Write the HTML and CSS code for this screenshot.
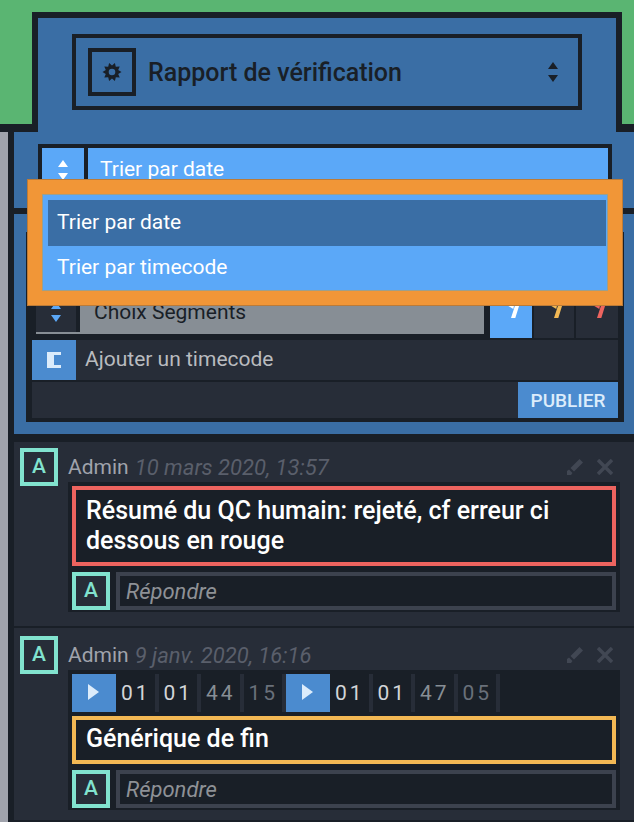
FILE: index.html
```
<!DOCTYPE html>
<html lang="fr">
<head>
  <meta charset="UTF-8">
  <meta name="viewport" content="width=device-width, initial-scale=1.0">
  <title>Rapport de vérification</title>
  <link rel="stylesheet" href="styles.css">
</head>
<body>
  <header class="header">
    <div class="tab">
      <button class="report" type="button">
        <span class="report-icon">
          <svg width="20" height="20" viewBox="0 0 20 20"><path fill="currentColor" fill-rule="evenodd" d="M19.500 10L16.200 12 17.700 15.600 13.800 15.300 12.900 19 10 16.500 7.100 19 6.200 15.300 2.300 15.600 3.800 12 .5 10 3.800 8 2.300 4.400 6.200 4.700 7.100 1 10 3.500 12.900 1 13.800 4.700 17.700 4.400 16.200 8zM10 6.700a3.300 3.300 0 1 0 0 6.600 3.300 3.300 0 0 0 0-6.600z"/></svg>
        </span>
        <span class="report-title">Rapport de vérification</span>
        <svg class="arrows" width="10" height="20" viewBox="0 0 10 20"><path fill="currentColor" d="M5 0l5 7H0zM5 20l5-7H0z"/></svg>
      </button>
    </div>
  </header>

  <main class="panel">
    <section class="sort">
      <button class="sort-select" type="button" aria-haspopup="listbox" aria-expanded="true">
        <span class="sort-icon"><svg class="arrows" width="10" height="20" viewBox="0 0 10 20"><path fill="currentColor" d="M5 0l5 7H0zM5 20l5-7H0z"/></svg></span>
        <span class="sort-label">Trier par date</span>
      </button>
      <div class="menu" role="listbox" aria-label="Tri">
        <button class="option selected" type="button" role="option" aria-selected="true">Trier par date</button>
        <button class="option" type="button" role="option" aria-selected="false">Trier par timecode</button>
      </div>
    </section>

    <section class="new-comment">
      <form class="form">
        <textarea class="message-input" aria-label="Commentaire"></textarea>
        <div class="form-row tools">
          <div class="segments">
            <span class="segments-icon"><svg class="arrows" width="10" height="20" viewBox="0 0 10 20"><path fill="currentColor" d="M5 0l5 7H0zM5 20l5-7H0z"/></svg></span>
            <select class="segments-select" aria-label="Segments">
              <option>Choix Segments</option>
            </select>
          </div>
          <div class="flags">
            <button class="flag white" type="button" aria-label="Information"><svg width="22" height="24" viewBox="0 0 22 24"><path fill="currentColor" d="M11 24h4.300L21.500 4h-4zM0 7l3-5h13l-2.700 13z"/></svg></button>
            <button class="flag yellow" type="button" aria-label="Attention"><svg width="22" height="24" viewBox="0 0 22 24"><path fill="currentColor" d="M11 24h4.300L21.500 4h-4zM0 7l3-5h13l-2.700 13z"/></svg></button>
            <button class="flag red" type="button" aria-label="Erreur"><svg width="22" height="24" viewBox="0 0 22 24"><path fill="currentColor" d="M11 24h4.300L21.500 4h-4zM0 7l3-5h13l-2.700 13z"/></svg></button>
          </div>
        </div>
        <button class="form-row add-timecode" type="button">
          <span class="timecode-icon"><svg width="14" height="16" viewBox="0 0 14 16"><path fill="currentColor" d="M0 0h14v3H7v10h7v3H0z"/></svg></span>
          <span class="add-label">Ajouter un timecode</span>
        </button>
        <div class="form-row actions">
          <button class="publish" type="submit">PUBLIER</button>
        </div>
      </form>
    </section>

    <section class="comments">
      <article class="comment">
        <span class="avatar">A</span>
        <div class="comment-main">
          <div class="comment-head">
            <span class="author">Admin</span>
            <time class="date" datetime="2020-03-10T13:57">10 mars 2020, 13:57</time>
            <button class="icon-button" type="button" aria-label="Modifier"><svg width="16" height="16" viewBox="0 0 16 16"><path fill="currentColor" d="M12.500 0L16 3.500 7 12.500 3.500 9zM2 10.500L5.500 14 4 16H0v-4z"/></svg></button>
            <button class="icon-button" type="button" aria-label="Supprimer"><svg width="16" height="16" viewBox="0 0 16 16"><path fill="none" stroke="currentColor" stroke-width="3.500" d="M1 1l14 14M15 1L1 15"/></svg></button>
          </div>
          <div class="thread">
            <p class="message error">Résumé du QC humain: rejeté, cf erreur ci dessous en rouge</p>
            <div class="reply">
              <span class="avatar">A</span>
              <input class="reply-input" type="text" placeholder="Répondre" aria-label="Répondre">
            </div>
          </div>
        </div>
      </article>

      <article class="comment">
        <span class="avatar">A</span>
        <div class="comment-main">
          <div class="comment-head">
            <span class="author">Admin</span>
            <time class="date" datetime="2020-01-09T16:16">9 janv. 2020, 16:16</time>
            <button class="icon-button" type="button" aria-label="Modifier"><svg width="16" height="16" viewBox="0 0 16 16"><path fill="currentColor" d="M12.500 0L16 3.500 7 12.500 3.500 9zM2 10.500L5.500 14 4 16H0v-4z"/></svg></button>
            <button class="icon-button" type="button" aria-label="Supprimer"><svg width="16" height="16" viewBox="0 0 16 16"><path fill="none" stroke="currentColor" stroke-width="3.500" d="M1 1l14 14M15 1L1 15"/></svg></button>
          </div>
          <div class="thread">
            <div class="timecodes">
              <div class="timecode">
                <button class="play" type="button" aria-label="Lire le début"><svg width="12" height="16" viewBox="0 0 12 16"><path fill="currentColor" d="M0 0l11 8-11 8z"/></svg></button>
                <span class="unit">01</span><span class="unit">01</span><span class="unit seconds">44</span><span class="unit frames">15</span>
              </div>
              <div class="timecode">
                <button class="play" type="button" aria-label="Lire la fin"><svg width="12" height="16" viewBox="0 0 12 16"><path fill="currentColor" d="M0 0l11 8-11 8z"/></svg></button>
                <span class="unit">01</span><span class="unit">01</span><span class="unit seconds">47</span><span class="unit frames">05</span>
              </div>
            </div>
            <p class="message warning">Générique de fin</p>
            <div class="reply">
              <span class="avatar">A</span>
              <input class="reply-input" type="text" placeholder="Répondre" aria-label="Répondre">
            </div>
          </div>
        </div>
      </article>
    </section>
  </main>
</body>
</html>
```
FILE: styles.css
```
* {
  box-sizing: border-box;
}
body {
  margin: 0;
  min-height: 100vh;
  display: flex;
  flex-direction: column;
  font-family: Roboto, sans-serif;
  font-size: 21px;
  background-color: #191f27;
  color: white;
}
button, input, select, textarea {
  margin: 0;
  padding: 0;
  border: none;
  border-radius: 0;
  background: none;
  color: inherit;
  font: inherit;
  text-align: left;
}
svg {
  display: block;
}

/* header */
.header {
  padding: 12px 12px 0 32px;
  background-color: #5ab572;
  border-bottom: 8px solid #191f27;
}
.tab {
  margin-bottom: -8px;
  padding: 16px 34px 22px;
  background-color: #3a6ea5;
  border: 6px solid #191f27;
  border-bottom: none;
}
.report {
  display: flex;
  align-items: center;
  gap: 12px;
  width: 100%;
  height: 76px;
  padding: 0 20px 0 12px;
  border: 4px solid #191f27;
  color: #191f27;
}
.report-icon {
  display: flex;
  align-items: center;
  justify-content: center;
  width: 48px;
  height: 48px;
  border: 4px solid #191f27;
}
.report-title {
  flex: 1;
  font-size: 25px;
  font-weight: 500;
}

/* side panel */
.panel {
  flex: 1;
  border-left: 8px solid #a0a3ac;
  padding-left: 6px;
}
.sort {
  position: relative;
  padding: 12px 22px 12px 24px;
  background-color: #3a6ea5;
  border-bottom: 6px solid #191f27;
}
.sort-select {
  display: flex;
  gap: 4px;
  width: 100%;
  height: 52px;
  border: 4px solid #191f27;
  background-color: #191f27;
}
.sort-icon {
  display: flex;
  align-items: center;
  justify-content: center;
  width: 42px;
  background-color: #5ba8f8;
}
.sort-label {
  flex: 1;
  padding-left: 12px;
  line-height: 42px;
  background-color: #5ba8f8;
}
.sort-icon, .sort-label {
  height: 44px;
}
.menu {
  position: absolute;
  z-index: 1;
  top: 48px;
  left: 14px;
  right: 12px;
  padding: 6px 2px 1px 6px;
  border: 14px solid #f19637;
  outline: 1px solid #bb7b38;
  box-shadow: inset 0 0 0 1px #9d9f8b;
  background-color: #5ba8f8;
}
.option {
  display: block;
  width: 100%;
  height: 44px;
  padding: 0 0 2px 9px;
}
.option.selected {
  height: 46px;
  background-color: #3a6ea5;
}

/* comment form */
.new-comment {
  padding: 18px 10px 12px 12px;
  background-color: #3a6ea5;
  border-bottom: 8px solid #191f27;
}
.form {
  display: flex;
  flex-direction: column;
  gap: 2px;
  padding: 6px 6px 4px;
  background-color: #191f27;
}
.message-input {
  height: 52px;
  resize: none;
  background-color: #272d38;
}
.form-row {
  display: flex;
  background-color: #272d38;
}
.tools {
  gap: 6px;
  height: 46px;
  padding-left: 4px;
  background-color: #191f27;
}
.segments {
  flex: 1;
  display: flex;
  height: 42px;
  border-bottom: 2px solid #878e95;
}
.segments-icon {
  display: flex;
  align-items: center;
  justify-content: center;
  width: 44px;
  background-color: #272d38;
  border-right: 4px solid #191f27;
  color: #5ba8f8;
}
.segments-select {
  flex: 1;
  appearance: none;
  padding-left: 14px;
  background-color: #878e95;
  color: #191f27;
}
.flags {
  display: flex;
  gap: 2px;
}
.flag {
  display: flex;
  justify-content: center;
  align-items: flex-start;
  width: 42px;
  padding-top: 2px;
  background-color: #272d38;
}
.flag.white {
  background-color: #5ba8f8;
}
.flag.yellow {
  width: 40px;
  color: #f2b854;
}
.flag.red {
  color: #ed645f;
}
.add-timecode {
  align-items: center;
  height: 40px;
  color: #b9bbbf;
}
.timecode-icon {
  display: flex;
  align-items: center;
  justify-content: center;
  width: 44px;
  height: 40px;
  background-color: #4b8bcf;
  color: #dcecfb;
}
.add-label {
  padding: 0 0 2px 9px;
}
.actions {
  justify-content: flex-end;
}
.publish {
  width: 100px;
  height: 36px;
  background-color: #4b8bcf;
  color: #dcecfb;
  font-size: 19px;
  font-weight: 500;
  text-align: center;
}

/* comments */
.comment {
  display: flex;
  gap: 10px;
  padding: 6px 14px 14px 6px;
  background-color: #272d38;
  border-bottom: 2px solid #191f27;
}
.comment + .comment {
  padding-top: 8px;
  padding-bottom: 10px;
}
.avatar {
  flex: none;
  width: 38px;
  height: 38px;
  border: 4px solid #82e3cf;
  background-color: #272d38;
  color: #82e3cf;
  font-weight: 500;
  line-height: 28px;
  text-align: center;
}
.comment-main {
  flex: 1;
}
.comment-head {
  display: flex;
  align-items: center;
  gap: 6px;
  height: 34px;
  padding: 4px 7px 0 0;
}
.author {
  color: #a0a3ac;
}
.date {
  flex: 1;
  color: #5a5f6b;
  font-size: 22px;
  font-style: italic;
}
.icon-button {
  margin-left: 8px;
  color: #414753;
}
.thread {
  padding: 4px 4px 2px;
  background-color: #191f27;
}
.message {
  margin: 0 0 6px;
  padding: 6px 10px;
  border: 4px solid;
  font-size: 25px;
  font-weight: 500;
  line-height: 30px;
}
.message.error {
  border-color: #ed645f;
}
.message.warning {
  padding: 4px 10px 6px;
  border-color: #f2b854;
}
.reply {
  display: flex;
  gap: 6px;
}
.reply-input {
  flex: 1;
  height: 38px;
  padding-left: 6px;
  border: 4px solid #3c424e;
  font-size: 22px;
  font-style: italic;
}
.reply-input::placeholder {
  color: #8e9196;
}
.timecodes {
  display: flex;
  margin-bottom: 4px;
}
.timecode {
  display: flex;
  width: 214px;
  height: 38px;
}
.play {
  display: flex;
  align-items: center;
  justify-content: center;
  width: 44px;
  padding-bottom: 2px;
  background-color: #4b8bcf;
  color: #dcecfb;
}
.unit {
  flex: 1;
  padding-left: 5px;
  border-right: 4px solid #272d38;
  color: #d3d5d8;
  line-height: 38px;
  letter-spacing: 3px;
}
.unit.seconds {
  color: #878e95;
}
.unit.frames {
  color: #69707a;
}
```
